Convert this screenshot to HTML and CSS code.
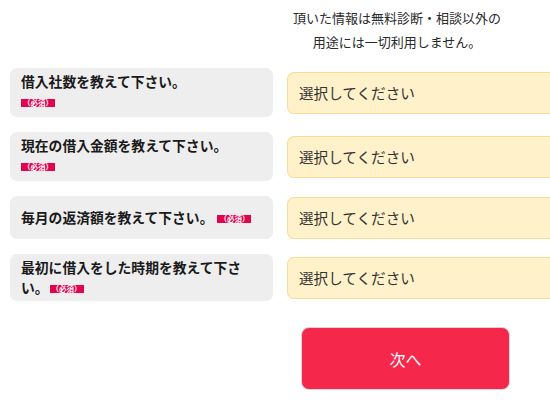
FILE: index.html
```html
<!DOCTYPE html>
<html lang="ja">
<head>
<meta charset="utf-8">
<title>借入診断</title>
<link rel="stylesheet" href="styles.css">
</head>
<body>
<div class="page">
  <p class="notice">頂いた情報は無料診断・相談以外の<br>用途には一切利用しません。</p>
  <div class="form">
    <div class="label">
      <div class="label-text">借入社数を教えて下さい。</div>
      <div class="badge-line"><span class="badge">（必須）</span></div>
    </div>
    <div class="select">選択してください</div>

    <div class="label">
      <div class="label-text">現在の借入金額を教えて下さい。</div>
      <div class="badge-line"><span class="badge">（必須）</span></div>
    </div>
    <div class="select">選択してください</div>

    <div class="label">
      <div class="label-text">毎月の返済額を教えて下さい。<span class="badge inline">（必須）</span></div>
    </div>
    <div class="select">選択してください</div>

    <div class="label">
      <div class="label-text"><span>最初に借入をした時期を教えて下さ</span><span>い。</span><span class="badge inline-tight">（必須）</span></div>
    </div>
    <div class="select">選択してください</div>
  </div>
  <div class="actions">
    <button class="next" type="button">次へ</button>
  </div>
</div>
</body>
</html>
```
FILE: styles.css
```css
html, body {
  margin: 0;
  padding: 0;
  background: #ffffff;
  overflow: hidden;
}
body {
  font-family: "Noto Sans CJK JP", "Noto Sans", "Liberation Sans", sans-serif;
  color: #222;
}
.page {
  width: 540px;
  padding: 6px 0 0 10px;
}
.notice {
  margin: 0 0 0 277px;
  width: 220px;
  text-align: center;
  font-size: 13px;
  line-height: 24px;
  color: #2a2a2a;
}
.form {
  margin-top: 14px;
  display: grid;
  grid-template-columns: 263px 1fr;
  column-gap: 14px;
  row-gap: 15px;
  align-items: center;
}
.label {
  background: #eeeeee;
  border-radius: 7px;
  padding: 3px 13px 4px 11px;
  min-height: 43px;
  box-sizing: border-box;
  display: flex;
  flex-direction: column;
  justify-content: center;
}
.label-text {
  font-size: 13.8px;
  line-height: 20px;
  font-weight: bold;
  color: #1a1a1a;
}
.badge-line {
  margin-top: 6px;
  margin-bottom: 5px;
  height: 11px;
  display: flex;
  align-items: center;
}
.badge {
  display: inline-block;
  background: #e2044f;
  color: #fff;
  font-size: 7.5px;
  line-height: 8px;
  padding: 0 2px;
  font-weight: bold;
  vertical-align: middle;
}
.badge.inline {
  margin-left: 4px;
}
.badge.inline-tight {
  margin-left: 1px;
}
.select {
  height: 42px;
  box-sizing: border-box;
  background: #fff1c9;
  border: 1px solid #f6dd9c;
  border-right: none;
  border-radius: 7px 0 0 7px;
  padding-left: 11px;
  display: flex;
  align-items: center;
  font-size: 14.6px;
  color: #333;
}
.actions {
  margin: 26px 0 0 291px;
}
.next {
  width: 209px;
  height: 63px;
  background: #f5284b;
  border: 1px solid #d6d6d6;
  border-radius: 8px;
  color: #fff;
  font-family: inherit;
  font-size: 16px;
  padding: 0;
}
```
